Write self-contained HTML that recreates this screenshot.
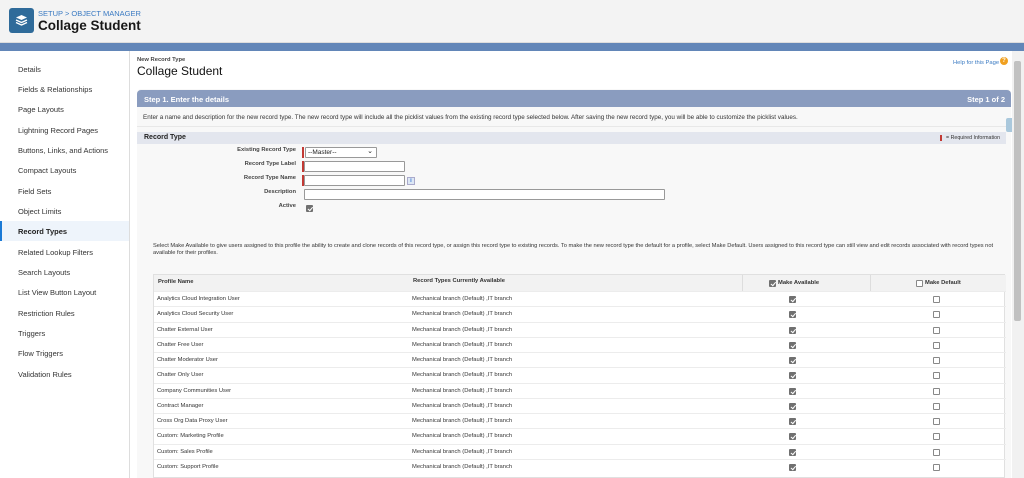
<!DOCTYPE html>
<html><head><style>
*{margin:0;padding:0;box-sizing:border-box}
html,body{width:1024px;height:478px;overflow:hidden}
body{font-family:"Liberation Sans",Arial,sans-serif;background:#fff;position:relative;color:#222}
.hdr{position:absolute;left:0;top:0;width:1024px;height:43px;background:#f3f3f3;border-bottom:1px solid #ddd}
.band{position:absolute;left:0;top:43px;width:1024px;height:8px;background:#6286b8}
.icon{position:absolute;left:9px;top:8px;width:25px;height:25px;background:#2f6b9a;border-radius:3px}
.crumb{position:absolute;left:38px;top:9px;font-size:7.5px;color:#3a7ac2}
.ttl{position:absolute;left:38px;top:18px;font-size:13.5px;font-weight:bold;color:#181818}
.side{position:absolute;left:0;top:51px;width:130px;height:427px;border-right:1px solid #ddd}
.side div{position:absolute;left:18px;font-size:7.5px;color:#333}
.sel{position:absolute;left:0;top:221px;width:130px;height:20px;background:#eef4fb;border-left:2px solid #1b7ad6}
.main{position:absolute;left:131px;top:51px;width:881px;height:427px;background:#fff}
.sb{position:absolute;left:1012px;top:51px;width:12px;height:427px;background:#f1f1f1}
.sb i{position:absolute;left:2px;top:10px;width:7px;height:260px;background:#c1c1c1;border-radius:2px}
.panel{position:absolute;left:137px;top:89px;width:874px;height:389px;background:#f8f8f8;border-radius:4px 4px 0 0}
.step{position:absolute;left:137px;top:90px;width:874px;height:17px;background:#8a9cbf;border-radius:4px 4px 0 0;color:#fff;font-size:7.5px;font-weight:bold}
.t{position:absolute;white-space:nowrap}
.inp{position:absolute;height:11px;background:#fff;border:1px solid #999;border-radius:1px}
.req{position:absolute;width:2px;height:11px;background:#c23934}
.ft{position:absolute;font-size:5.8px;font-weight:bold;color:#444;text-align:right;width:100px}
.cb{position:absolute;width:7px;height:7px;border:1px solid #888;border-radius:1px;background:#fff}
.cb.on{background:#707070;border-color:#707070}
.cb.on:after{content:"";position:absolute;left:1.5px;top:0;width:2px;height:3.5px;border:solid #fff;border-width:0 1px 1px 0;transform:rotate(40deg)}
.tbl{position:absolute;left:153px;top:274px;width:852px;height:204px;background:#fff;border:1px solid #e0e0e0}
.row{position:absolute;left:0;width:852px;height:15px;border-top:1px solid #ececec;font-size:5.8px;color:#333}
</style></head><body>
<div class="hdr"></div>
<div class="icon"><svg width="25" height="25" viewBox="0 0 25 25"><path d="M12.5 7 L18 9.5 L12.5 12 L7 9.5Z" fill="#fff"/><path d="M7 12 L12.5 14.5 L18 12" stroke="#fff" stroke-width="1.3" fill="none"/><path d="M7 14.5 L12.5 17 L18 14.5" stroke="#fff" stroke-width="1.3" fill="none"/></svg></div>
<div class="crumb">SETUP &gt; OBJECT MANAGER</div>
<div class="ttl">Collage Student</div>
<div class="band"></div>
<div class="sel"></div>
<div class="side">
<div style="top:14px">Details</div>
<div style="top:34px">Fields &amp; Relationships</div>
<div style="top:54px">Page Layouts</div>
<div style="top:75px">Lightning Record Pages</div>
<div style="top:95px">Buttons, Links, and Actions</div>
<div style="top:115px">Compact Layouts</div>
<div style="top:136px">Field Sets</div>
<div style="top:156px">Object Limits</div>
<div style="top:176px;font-weight:bold;color:#222">Record Types</div>
<div style="top:197px">Related Lookup Filters</div>
<div style="top:217px">Search Layouts</div>
<div style="top:237px">List View Button Layout</div>
<div style="top:258px">Restriction Rules</div>
<div style="top:278px">Triggers</div>
<div style="top:298px">Flow Triggers</div>
<div style="top:319px">Validation Rules</div>
</div>
<div class="main"></div>
<div class="t" style="left:137px;top:57px;font-size:5.8px;font-weight:bold;color:#444">New Record Type</div>
<div class="t" style="left:137px;top:64px;font-size:12px;color:#111">Collage Student</div>
<div class="t" style="left:953px;top:60px;font-size:5.8px;color:#3a7ac2">Help for this Page</div>
<div style="position:absolute;left:1000px;top:57px;width:8px;height:8px;border-radius:50%;background:#f0a020;color:#fff;font-size:6px;text-align:center;line-height:8px;font-weight:bold">?</div>
<div class="panel"></div>
<div class="step"><span class="t" style="left:7px;top:5px">Step 1. Enter the details</span><span class="t" style="right:6px;top:5px">Step 1 of 2</span></div>
<div class="t" style="left:143px;top:114px;font-size:6.3px;color:#333">Enter a name and description for the new record type. The new record type will include all the picklist values from the existing record type selected below. After saving the new record type, you will be able to customize the picklist values.</div>
<div style="position:absolute;left:137px;top:126px;width:874px;height:1px;background:#e8e8e8"></div>
<div style="position:absolute;left:137px;top:132px;width:869px;height:12px;background:#e3e6ee"></div>
<div class="t" style="left:144px;top:134px;font-size:7px;font-weight:bold;color:#222">Record Type</div>
<div style="position:absolute;left:940px;top:135px;width:2px;height:6px;background:#c23934"></div>
<div class="t" style="left:946px;top:135px;font-size:5.3px;color:#333">= Required Information</div>
<div style="position:absolute;left:1006px;top:118px;width:6px;height:14px;background:#aac8dc;border-radius:2px 0 0 2px"></div>
<div class="ft" style="left:196px;top:147px">Existing Record Type</div>
<div class="req" style="left:302px;top:147px"></div>
<div class="inp" style="left:305px;top:147px;width:72px;font-size:6.5px;padding-left:2px;line-height:9px">--Master--<span style="position:absolute;right:3px;top:-1px;font-size:7px">&#8964;</span></div>
<div class="ft" style="left:196px;top:161px">Record Type Label</div>
<div class="req" style="left:302px;top:161px"></div>
<div class="inp" style="left:304px;top:161px;width:101px"></div>
<div class="ft" style="left:196px;top:175px">Record Type Name</div>
<div class="req" style="left:302px;top:175px"></div>
<div class="inp" style="left:304px;top:175px;width:101px"></div>
<div style="position:absolute;left:407px;top:177px;width:8px;height:8px;background:#dde8f5;border:1px solid #aac;font-size:5px;color:#2a6ad0;text-align:center;line-height:6px;font-weight:bold">i</div>
<div class="ft" style="left:196px;top:189px">Description</div>
<div class="inp" style="left:304px;top:189px;width:361px"></div>
<div class="ft" style="left:196px;top:203px">Active</div>
<div class="cb on" style="left:306px;top:205px"></div>
<div class="t" style="left:153px;top:243px;font-size:5.7px;color:#333;white-space:normal;width:852px;line-height:7px">Select Make Available to give users assigned to this profile the ability to create and clone records of this record type, or assign this record type to existing records. To make the new record type the default for a profile, select Make Default. Users assigned to this record type can still view and edit records associated with record types not available for their profiles.</div>
<div class="tbl">
<div style="position:absolute;left:0;top:0;width:852px;height:16px;background:#f2f2f2;font-size:5.8px;font-weight:bold;color:#333">
<span class="t" style="left:4px;top:4px">Profile Name</span>
<span class="t" style="left:259px;top:3px">Record Types Currently Available</span>
<span style="position:absolute;left:588px;top:0;width:1px;height:16px;background:#ddd"></span>
<span style="position:absolute;left:716px;top:0;width:1px;height:16px;background:#ddd"></span>
<span class="cb on" style="left:615px;top:5px"></span><span class="t" style="left:624px;top:5px">Make Available</span>
<span class="cb" style="left:762px;top:5px"></span><span class="t" style="left:771px;top:5px">Make Default</span>
</div>
</div>
<div id="rows"></div>
<script>
var n=["Analytics Cloud Integration User","Analytics Cloud Security User","Chatter External User","Chatter Free User","Chatter Moderator User","Chatter Only User","Company Communities User","Contract Manager","Cross Org Data Proxy User","Custom: Marketing Profile","Custom: Sales Profile","Custom: Support Profile"];
var h="";for(var i=0;i<n.length;i++){var y=291+i*15.25;
h+='<div class="row" style="left:154px;top:'+y+'px"><span class="t" style="left:3px;top:4px">'+n[i]+'</span><span class="t" style="left:258px;top:4px">Mechanical branch (Default) ,IT branch</span><span class="cb on" style="left:635px;top:4px"></span><span class="cb" style="left:779px;top:4px"></span></div>';}
document.getElementById("rows").innerHTML=h;
</script>
<div class="sb"><i></i></div>
</body></html>
